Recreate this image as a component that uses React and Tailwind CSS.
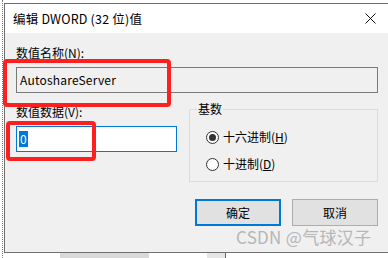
import React from "react";

const FONT = { fontFamily: '"Noto Sans CJK SC", "Noto Sans", "Liberation Sans", sans-serif' };

function Radio({ checked, label, u }) {
  return (
    <div className="flex items-center gap-[4px] h-[16px]">
      <div className="w-[13px] h-[13px] rounded-full border border-[#333333] bg-white flex items-center justify-center">
        {checked && <div className="w-[7px] h-[7px] rounded-full bg-[#333333]" />}
      </div>
      <span className="text-[12px] leading-[16px] text-black">
        {label}(<span className="underline">{u}</span>)
      </span>
    </div>
  );
}

export default function App() {
  return (
    <div className="relative w-[388px] h-[258px] bg-white overflow-hidden" style={FONT}>
      {/* background desktop hints */}
      <div className="absolute left-[2px] top-0 h-[258px] w-0 border-l border-dotted border-[#777777]" />
      <div className="absolute left-[56px] top-[253px] w-[93px] h-[5px] bg-[#d9d9d9] border-l-[4px] border-[#ffffff]" />
      <div className="absolute left-[207px] top-[253px] w-[19px] h-[5px] bg-[#e6e6e6] border-r border-[#666]" />

      {/* dialog window */}
      <div className="absolute left-[4px] top-[3px] w-[384px] h-[250px] border-l border-b border-t border-[#707070] flex flex-col">
        <div className="h-[29px] bg-white flex items-center justify-between pl-[8px] pr-[12px]">
          <span className="text-[12.5px] leading-[16px] text-black tracking-[0.2px]">编辑 DWORD (32 位)值</span>
          <svg width="11" height="11" viewBox="0 0 11 11">
            <path d="M0.5 0.5 L10.5 10.5 M10.5 0.5 L0.5 10.5" stroke="#111" strokeWidth="1" />
          </svg>
        </div>
        <div className="flex-1 bg-[#f0f0f0] pl-[11px] pr-[10px] pt-[12px]">
          <div className="text-[12px] leading-[16px] text-black">数值名称(N):</div>
          <div className="mt-[6px] h-[26px] w-[362px] border border-[#7a7a7a] bg-[#f0f0f0] flex items-center pl-[3px] text-[12px] text-black tracking-[0.2px]">
            AutoshareServer
          </div>
          <div className="flex mt-[8px]">
            <div className="w-[161px]">
              <div className="text-[12px] leading-[16px] text-black mt-[3px]">数值数据(V):</div>
              <div className="mt-[6px] h-[26px] w-[161px] border border-[#0078d7] bg-white flex items-center pl-[2px]">
                <span className="bg-[#0078d7] text-white text-[12px] leading-[16px] px-[1px]">0</span>
              </div>
            </div>
            <div className="ml-[12px] mt-[8px] w-[189px] h-[73px] border border-[#dcdcdc] relative">
              <span className="absolute left-[7px] top-[-9px] bg-[#f0f0f0] px-[1px] text-[12px] leading-[16px] text-black">基数</span>
              <div className="pl-[16px] pt-[19px] flex flex-col gap-[11px]">
                <Radio checked label="十六进制" u="H" />
                <Radio label="十进制" u="D" />
              </div>
            </div>
          </div>
          <div className="flex justify-end gap-[11px] mt-[17px]">
            <div className="w-[86px] h-[27px] border-2 border-[#0078d7] bg-[#e1e1e1] flex items-center justify-center text-[12px] text-black">确定</div>
            <div className="w-[86px] h-[27px] border border-[#adadad] bg-[#e1e1e1] flex items-center justify-center text-[12px] text-black">取消</div>
          </div>
        </div>
      </div>

      {/* red annotation boxes */}
      <div className="absolute left-[3px] top-[59px] w-[168px] h-[48px] border-[4px] border-[#ff1f1f] rounded-[4px]" />
      <div className="absolute left-[6px] top-[121px] w-[90px] h-[40px] border-[4px] border-[#ff1f1f] rounded-[4px]" />

      {/* watermark */}
      <div className="absolute left-[236px] top-[226px] text-[17px] leading-[22px] text-[#a8a8a8] opacity-80 whitespace-nowrap tracking-[0.3px]">
        CSDN @气球汉子
      </div>
    </div>
  );
}
